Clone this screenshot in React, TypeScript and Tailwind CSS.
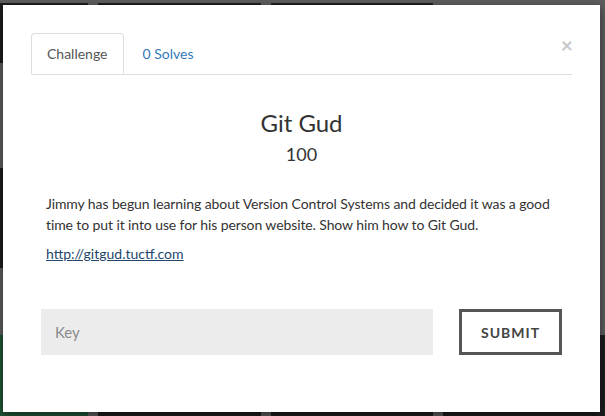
import React from "react";

export default function App() {
  return (
    <div className="relative w-[605px] h-[416px] overflow-hidden bg-[#5d5d5d] font-['Lato','Liberation_Sans',sans-serif]">
      {/* dimmed page behind */}
      <div className="flex h-full ml-[-74px] gap-[10px]">
        <div className="flex flex-col w-[180px] pt-[3px]">
          <div className="h-[60px] bg-[#1d1d1d]" />
          <div className="h-[105px]" />
          <div className="h-[100px] bg-[#1d1d1d]" />
          <div className="h-[67px]" />
          <div className="flex-1 bg-[#1e5536]" />
        </div>
        <div className="w-[180px] mt-[3px] bg-[#1d1d1d]" />
        <div className="w-[180px] mt-[3px] bg-[#1d1d1d]" />
        <div className="flex flex-col w-[180px]">
          <div className="h-[335px]" />
          <div className="flex-1 bg-[#1d1d1d]" />
        </div>
      </div>

      {/* modal */}
      <div className="absolute left-[3px] top-[5px] w-[597px] h-[407px] bg-white shadow-[0_3px_9px_rgba(0,0,0,0.5)] px-[28px] pt-[28px]">
        <button className="absolute right-[27px] top-[29px] text-[21px] font-bold leading-none text-[#c8c8c8]">
          ×
        </button>
        <div className="flex border-b border-[#dddddd]">
          <div className="h-[41px] mb-[-1px] px-[15px] flex items-center border border-[#dddddd] border-b-white rounded-t-[4px] bg-white text-[14px] text-[#555555]">
            Challenge
          </div>
          <div className="h-[41px] ml-[4px] px-[15px] flex items-center text-[14px] text-[#337ab7]">
            0 Solves
          </div>
        </div>
        <div className="px-[15px] text-[#333333]">
          <div className="pt-[34px] text-center text-[24px] leading-[1.2]">Git Gud</div>
          <div className="mt-[6px] text-center text-[18px] leading-[1.2]">100</div>
          <p className="mt-[28px] text-[14px] leading-[21px] tracking-[-0.1px] mr-[-6px]">
            Jimmy has begun learning about Version Control Systems and decided it was a good time to put it into use for his person website. Show him how to Git Gud.
          </p>
          <p className="mt-[8px] text-[14px] leading-[21px]">
            <a className="underline text-[#23466b]">http://gitgud.tuctf.com</a>
          </p>
        </div>
        <div className="flex mt-[45px] ml-[10px] gap-[26px]">
          <input
            placeholder="Key"
            className="w-[392px] h-[46px] bg-[#ececec] px-[14px] text-[15px] placeholder:text-[#8a8a8a] outline-none"
          />
          <button className="w-[103px] h-[46px] border-[3px] border-[#555555] text-[14px] font-bold tracking-[1px] text-[#444444]">
            SUBMIT
          </button>
        </div>
      </div>
    </div>
  );
}
